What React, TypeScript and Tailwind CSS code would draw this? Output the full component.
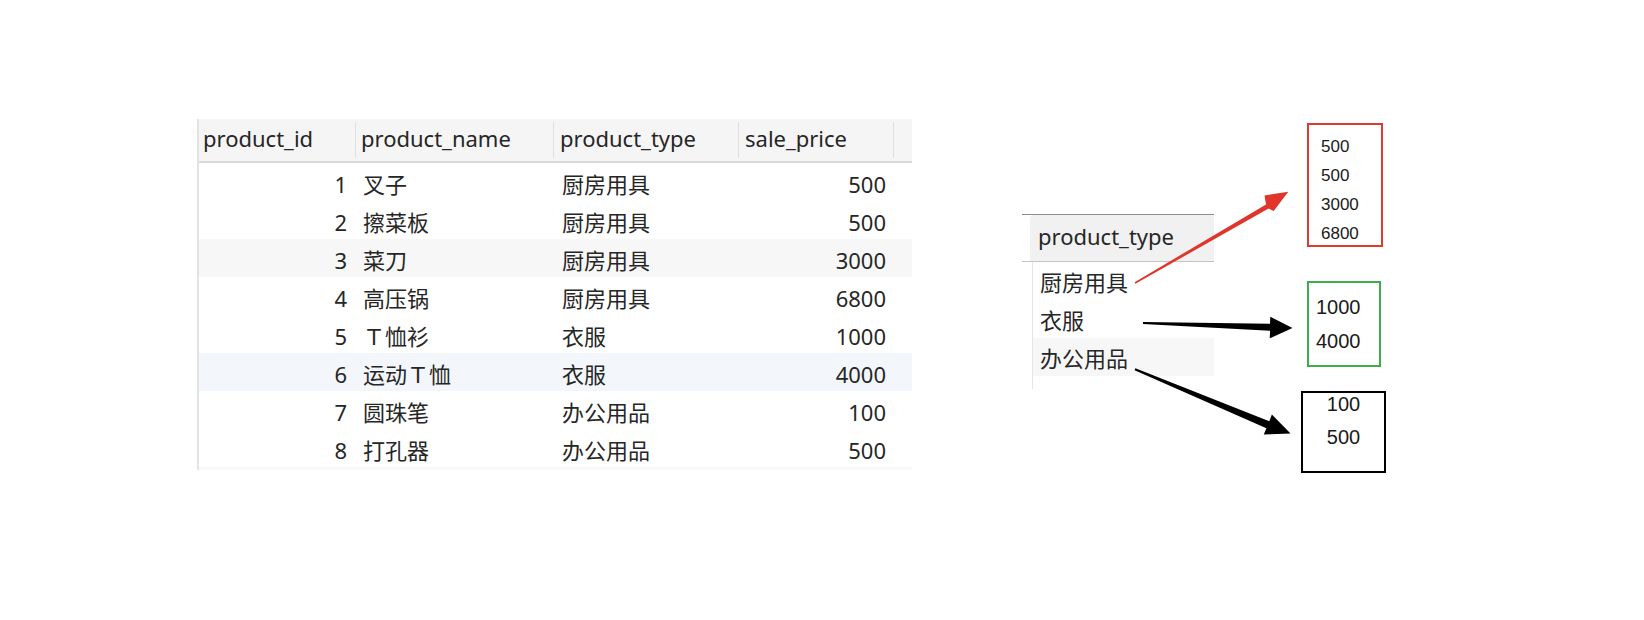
import React from 'react';

const rows = [
  { id: 1, name: '叉子', type: '厨房用具', price: 500 },
  { id: 2, name: '擦菜板', type: '厨房用具', price: 500 },
  { id: 3, name: '菜刀', type: '厨房用具', price: 3000 },
  { id: 4, name: '高压锅', type: '厨房用具', price: 6800 },
  { id: 5, name: 'Ｔ恤衫', type: '衣服', price: 1000 },
  { id: 6, name: '运动Ｔ恤', type: '衣服', price: 4000 },
  { id: 7, name: '圆珠笔', type: '办公用品', price: 100 },
  { id: 8, name: '打孔器', type: '办公用品', price: 500 },
];

const stripe = (i: number) => {
  if (i === 2) return 'bg-[#f7f7f7]';
  if (i === 5) return 'bg-[#f3f6fb]';
  return 'bg-white';
};

const font = "font-['Noto_Sans','Noto_Sans_CJK_SC',sans-serif]";

const ProductTable = () => (
  <div className={`ml-[197px] mt-[119px] w-[715px] border-l-2 border-[#e3e3e3] ${font} text-[22px] text-[#262626]`}>
    {/* header */}
    <div className="flex h-[42px] items-center bg-[#f5f5f5] border-b-2 border-[#d9d9d9] box-content">
      <div className="w-[156px] pl-[4px] pb-[4px]">product_id</div>
      <div className="w-[198px] h-[36px] flex items-center border-l border-[#e0e0e0] pl-[5px] pb-[4px]">product_name</div>
      <div className="w-[185px] h-[36px] flex items-center border-l border-[#e0e0e0] pl-[6px] pb-[4px]">product_type</div>
      <div className="w-[155px] h-[36px] flex items-center border-l border-[#e0e0e0] pl-[6px] pb-[4px]">sale_price</div>
      <div className="w-[19px] h-[36px] border-l border-[#e0e0e0]" />
    </div>

    {rows.map((r, i) => (
      <div key={r.id} className={`flex h-[38px] items-center pt-[4px] ${stripe(i)}`}>
        <div className="w-[156px] text-right pr-[8px]">{r.id}</div>
        <div className="w-[198px] pl-[8px]">{r.name}</div>
        <div className="w-[185px] pl-[9px]">{r.type}</div>
        <div className="w-[155px] text-right pr-[7px]">{r.price}</div>
        <div className="w-[19px]" />
      </div>
    ))}
    <div className="h-[3px] bg-[#f9f9f9]" />
  </div>
);

const TypeTable = () => (
  <div className={`ml-[110px] mt-[214px] w-[192px] border-t border-[#8c8c8c] ${font} text-[22px] text-[#262626]`}>
    <div className="ml-[8px] h-[46px] flex items-center bg-[#f1f1f1] rounded-tl-[4px] pl-[8px] pb-[4px]">product_type</div>
    <div className="h-px bg-[#c4c4c4]" />
    <div className="ml-[10px] border-l border-[#e5e5e5] pb-[13px]">
      {['厨房用具', '衣服', '办公用品'].map((t, i) => (
        <div key={t} className={`h-[38px] flex items-center pl-[7px] pt-[2px] ${i === 2 ? 'bg-[#f7f7f7]' : ''}`}>
          {t}
        </div>
      ))}
    </div>
  </div>
);

const Boxes = () => (
  <div className="ml-[87px] mt-[123px] flex flex-col font-['Liberation_Sans',sans-serif] text-[#1a1a1a]">
    <div className="ml-[6px] w-[76px] h-[124px] border-2 border-[#dc3b30] pt-[7px] pl-[12px] text-[17px] leading-[29px]">
      <div>500</div>
      <div>500</div>
      <div>3000</div>
      <div>6800</div>
    </div>
    <div className="mt-[34px] ml-[6px] w-[74px] h-[86px] border-2 border-[#3dae4b] pt-[7px] pl-[7px] text-[20px] leading-[34px]">
      <div>1000</div>
      <div>4000</div>
    </div>
    <div className="mt-[24px] w-[85px] h-[82px] border-2 border-black flex flex-col items-center gap-[11px] text-[20px] leading-[22px]">
      <div>100</div>
      <div>500</div>
    </div>
  </div>
);

const Arrows = () => (
  <svg className="absolute inset-0 pointer-events-none" width={1644} height={620} viewBox="0 0 1644 620">
    {/* red: 厨房用具 -> first box */}
    <polygon
      fill="#e0352b"
      points="1135.4,283.7 1134.6,282.3 1266.0,204.4 1264.5,195.5 1288.3,191.7 1273.7,210.9 1268.6,208.6"
    />
    {/* black: 衣服 -> second box */}
    <polygon
      fill="#000"
      points="1143,322 1143,324 1270.1,330.8 1269.7,338.3 1292.5,328 1270.3,316.8 1270.0,323.8"
    />
    {/* black: 办公用品 -> third box */}
    <polygon
      fill="#000"
      points="1135.4,368.3 1134.6,370.3 1266.4,428.2 1263.8,434.6 1290.5,433.5 1271.9,414.4 1269.3,421.2"
    />
  </svg>
);

export default function App() {
  return (
    <div className="relative w-[1644px] h-[620px] bg-white flex items-start overflow-hidden">
      <ProductTable />
      <TypeTable />
      <Boxes />
      <Arrows />
    </div>
  );
}
